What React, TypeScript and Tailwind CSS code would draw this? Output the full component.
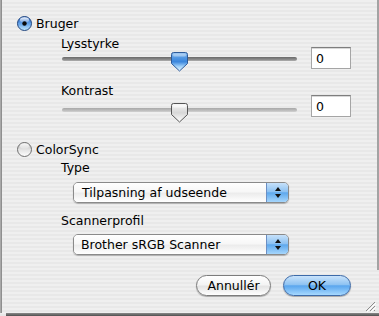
import React from "react";

const font = "font-['DejaVu_Sans',sans-serif] text-[12.5px] leading-[15px] text-black";

const RadioOn = () => (
  <svg width="15" height="15" viewBox="0 0 15 15" className="shrink-0">
    <defs>
      <linearGradient id="rbOn" x1="0" y1="0" x2="0" y2="1">
        <stop offset="0" stopColor="#2a66c4" />
        <stop offset="0.5" stopColor="#5f9fe8" />
        <stop offset="1" stopColor="#c6ebff" />
      </linearGradient>
      <linearGradient id="rhOn" x1="0" y1="0" x2="0" y2="1">
        <stop offset="0" stopColor="#ffffff" stopOpacity="0.95" />
        <stop offset="1" stopColor="#ffffff" stopOpacity="0.15" />
      </linearGradient>
    </defs>
    <circle cx="7.5" cy="7.5" r="7" fill="url(#rbOn)" stroke="#23467e" strokeWidth="1" />
    <ellipse cx="7.5" cy="4" rx="4.6" ry="2.7" fill="url(#rhOn)" />
    <circle cx="7.5" cy="7.5" r="2.2" fill="#0a0a0a" />
  </svg>
);

const RadioOff = () => (
  <svg width="15" height="15" viewBox="0 0 15 15" className="shrink-0">
    <defs>
      <linearGradient id="rbOff" x1="0" y1="0" x2="0" y2="1">
        <stop offset="0" stopColor="#b9b9b9" />
        <stop offset="0.5" stopColor="#e2e2e2" />
        <stop offset="1" stopColor="#ffffff" />
      </linearGradient>
      <linearGradient id="rhOff" x1="0" y1="0" x2="0" y2="1">
        <stop offset="0" stopColor="#ffffff" stopOpacity="0.95" />
        <stop offset="1" stopColor="#ffffff" stopOpacity="0.2" />
      </linearGradient>
    </defs>
    <circle cx="7.5" cy="7.5" r="7" fill="url(#rbOff)" stroke="#6e6e6e" strokeWidth="1" />
    <ellipse cx="7.5" cy="4" rx="4.6" ry="2.7" fill="url(#rhOff)" />
  </svg>
);

const Thumb = ({ blue }: { blue: boolean }) => (
  <svg width="17" height="20" viewBox="0 0 17 20">
    <defs>
      <linearGradient id="thB" x1="0" y1="0" x2="0" y2="1">
        <stop offset="0" stopColor="#8fc0f0" />
        <stop offset="0.3" stopColor="#4f95e2" />
        <stop offset="0.5" stopColor="#3b86dc" />
        <stop offset="0.75" stopColor="#9fd0fa" />
        <stop offset="1" stopColor="#e2f3ff" />
      </linearGradient>
      <linearGradient id="thW" x1="0" y1="0" x2="0" y2="1">
        <stop offset="0" stopColor="#f6f6f6" />
        <stop offset="0.5" stopColor="#d7d7d7" />
        <stop offset="1" stopColor="#ffffff" />
      </linearGradient>
    </defs>
    <path
      d="M2.5 0.5 H14.5 Q16.5 0.5 16.5 2.5 V11.5 L8.5 19 L0.5 11.5 V2.5 Q0.5 0.5 2.5 0.5 Z"
      fill={blue ? "url(#thB)" : "url(#thW)"}
      stroke={blue ? "#2d5a99" : "#555555"}
      strokeWidth="1"
    />
    <rect x="2" y="1.5" width="13" height="3" rx="1.5" fill="#ffffff" opacity={blue ? 0.35 : 0.6} />
  </svg>
);

const Slider = ({ dark, trackTop }: { dark: boolean; trackTop: string }) => (
  <div className="flex items-start">
    <div className={`relative w-[235px] h-[4px] ${trackTop} rounded-full ${dark ? "bg-[linear-gradient(to_bottom,#6a6a6a,#8a8a8a_60%,#b0b0b0)]" : "bg-[linear-gradient(to_bottom,#a8a8a8,#bdbdbd_60%,#d2d2d2)]"}`}>
      <div className="absolute left-[109px] top-[-5px]">
        <Thumb blue={dark} />
      </div>
    </div>
    <div className={`ml-[14px] w-[40px] h-[22px] bg-white border border-[#a5a5a5] border-t-[#7e7e7e] shadow-[inset_0_1px_0_#d8d8d8] pl-[4px] flex items-center ${font}`}>
      0
    </div>
  </div>
);

const Popup = ({ text, pl }: { text: string; pl: string }) => (
  <div className="flex w-[216px] h-[21px] rounded-[5px] border border-[#8a8a8a] overflow-hidden shadow-[0_1px_1px_rgba(0,0,0,0.25)]">
    <div className={`flex-1 flex items-center ${pl} bg-[linear-gradient(to_bottom,#ffffff_0%,#f7f7f7_45%,#ececec_55%,#ffffff_100%)] ${font}`}>
      {text}
    </div>
    <div className="w-[22px] border-l border-[#6b8fc4] bg-[linear-gradient(to_bottom,#c6e1fa_0%,#8ec2f2_45%,#5ea8ed_52%,#a6d6fc_100%)] flex flex-col items-center justify-center gap-[3px]">
      <svg width="6" height="4" viewBox="0 0 6 4"><path d="M3 0 L6 4 H0 Z" fill="#111" /></svg>
      <svg width="6" height="4" viewBox="0 0 6 4"><path d="M0 0 H6 L3 4 Z" fill="#111" /></svg>
    </div>
  </div>
);

export default function App() {
  return (
    <div className="relative w-[379px] h-[316px] overflow-hidden flex flex-col bg-[repeating-linear-gradient(to_bottom,#efefef_0px,#efefef_2px,#e8e8e8_2px,#e8e8e8_4px)]">
      <div className="flex flex-1">
        <div className="w-[2px] bg-[#a9a9a9] border-r border-[#8f8f8f]" />
        <div className="flex-1 flex flex-col">
          {/* Bruger */}
          <div className="mt-[16px] ml-[15px] flex items-center gap-[4px]">
            <RadioOn />
            <span className={font}>Bruger</span>
          </div>
          <div className={`mt-[5px] ml-[59px] ${font}`}>Lysstyrke</div>
          <div className="mt-[-4px] ml-[60px]">
            <Slider dark={true} trackTop="mt-[10px]" />
          </div>
          <div className={`mt-[14px] ml-[59px] ${font}`}>Kontrast</div>
          <div className="mt-[-3px] ml-[60px]">
            <Slider dark={false} trackTop="mt-[13px]" />
          </div>

          {/* ColorSync */}
          <div className="mt-[25px] ml-[15px] flex items-center gap-[4px]">
            <RadioOff />
            <span className={font}>ColorSync</span>
          </div>
          <div className={`mt-[3px] ml-[59px] ${font}`}>Type</div>
          <div className="mt-[7px] ml-[71px]">
            <Popup text="Tilpasning af udseende" pl="pl-[8px]" />
          </div>
          <div className={`mt-[10px] ml-[59px] ${font}`}>Scannerprofil</div>
          <div className="mt-[6px] ml-[71px]">
            <Popup text="Brother sRGB Scanner" pl="pl-[7px]" />
          </div>

          {/* Buttons */}
          <div className="mt-[20px] flex justify-end gap-[12px] pr-[26px]">
            <div className={`w-[75px] h-[21px] rounded-full border border-[#7c7c7c] flex items-center justify-center bg-[linear-gradient(to_bottom,#ffffff_0%,#f4f4f4_45%,#e4e4e4_55%,#ffffff_100%)] shadow-[0_1px_1px_rgba(0,0,0,0.3)] ${font}`}>
              Annullér
            </div>
            <div className={`w-[68px] h-[21px] rounded-full border border-[#3d6aa8] flex items-center justify-center bg-[linear-gradient(to_bottom,#c9e3fb_0%,#8fc3f2_45%,#5aa6ee_52%,#a6d8ff_100%)] shadow-[0_1px_1px_rgba(0,0,0,0.3)] ${font}`}>
              OK
            </div>
          </div>
        </div>
        <div className="w-[2px] h-[270px] bg-[#a3a3a3]" />
      </div>
      <div className="ml-[6px] h-[3px] bg-[linear-gradient(to_bottom,#8a8a8a,#4f4f4f)]" />
      <svg className="absolute right-[3px] bottom-[4px]" width="11" height="11" viewBox="0 0 11 11">
        <path d="M10 1 L1 10 M10 5 L5 10 M10 9 L9 10" stroke="#8c8c8c" strokeWidth="1" />
        <path d="M11 2 L2 11 M11 6 L6 11" stroke="#ffffff" strokeWidth="1" />
      </svg>
    </div>
  );
}
